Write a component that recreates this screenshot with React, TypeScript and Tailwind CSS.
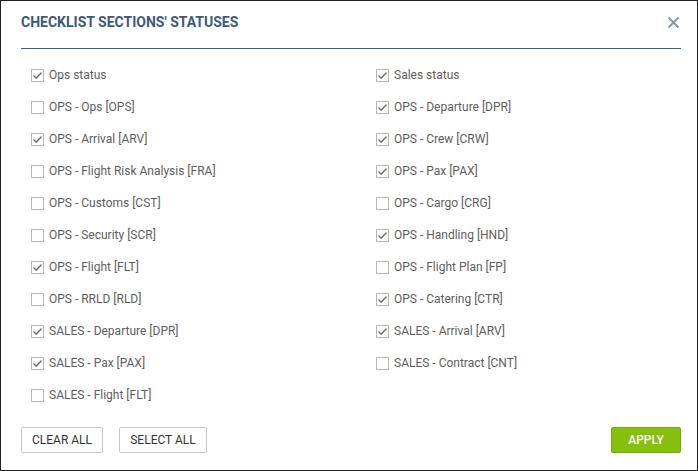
import { useState } from "react";

type Item = { label: string; checked: boolean };

const left: Item[] = [
  { label: "Ops status", checked: true },
  { label: "OPS - Ops [OPS]", checked: false },
  { label: "OPS - Arrival [ARV]", checked: true },
  { label: "OPS - Flight Risk Analysis [FRA]", checked: false },
  { label: "OPS - Customs [CST]", checked: false },
  { label: "OPS - Security [SCR]", checked: false },
  { label: "OPS - Flight [FLT]", checked: true },
  { label: "OPS - RRLD [RLD]", checked: false },
  { label: "SALES - Departure [DPR]", checked: true },
  { label: "SALES - Pax [PAX]", checked: true },
  { label: "SALES - Flight [FLT]", checked: false },
];

const right: Item[] = [
  { label: "Sales status", checked: true },
  { label: "OPS - Departure [DPR]", checked: true },
  { label: "OPS - Crew [CRW]", checked: true },
  { label: "OPS - Pax [PAX]", checked: true },
  { label: "OPS - Cargo [CRG]", checked: false },
  { label: "OPS - Handling [HND]", checked: true },
  { label: "OPS - Flight Plan [FP]", checked: false },
  { label: "OPS - Catering [CTR]", checked: true },
  { label: "SALES - Arrival [ARV]", checked: true },
  { label: "SALES - Contract [CNT]", checked: false },
];

function Check({ item, onToggle }: { item: Item; onToggle: () => void }) {
  return (
    <label className="flex h-[32px] items-center gap-[5px] cursor-pointer select-none" onClick={onToggle}>
      <span className="flex h-[13px] w-[13px] items-center justify-center border border-[#b8b8b8] bg-white">
        {item.checked && (
          <svg width="11" height="11" viewBox="0 0 11 11" fill="none">
            <path d="M1.5 5.5L4.2 8.2L9.5 2.5" stroke="#6a6a6a" strokeWidth="1.3" />
          </svg>
        )}
      </span>
      <span className="text-[12px] text-[#5e5e5e]">{item.label}</span>
    </label>
  );
}

export default function App() {
  const [l, setL] = useState(left);
  const [r, setR] = useState(right);

  const toggle = (list: Item[], set: (v: Item[]) => void, i: number) =>
    set(list.map((it, j) => (j === i ? { ...it, checked: !it.checked } : it)));

  const setAll = (v: boolean) => {
    setL(l.map((it) => ({ ...it, checked: v })));
    setR(r.map((it) => ({ ...it, checked: v })));
  };

  return (
    <div className="w-[698px] h-[471px] border border-[#222] bg-white font-['Roboto',sans-serif] flex flex-col">
      <header className="ml-5 mr-4 h-[48px] pt-[13px] border-b border-[#3d5a80] flex items-start justify-between">
        <h1 className="text-[14px] leading-[16px] font-bold text-[#3e5877]">
          CHECKLIST SECTIONS' STATUSES
        </h1>
        <button className="mt-[2px] mr-[1px] text-[#8a97a6]">
          <svg width="13" height="13" viewBox="0 0 13 13" fill="none">
            <path d="M1.5 1.5L11.5 11.5M11.5 1.5L1.5 11.5" stroke="currentColor" strokeWidth="2" />
          </svg>
        </button>
      </header>

      <div className="ml-5 mr-4 pl-[10px] pt-[10px] grid grid-cols-[345px_1fr]">
        <div className="flex flex-col">
          {l.map((it, i) => (
            <Check key={it.label} item={it} onToggle={() => toggle(l, setL, i)} />
          ))}
        </div>
        <div className="flex flex-col">
          {r.map((it, i) => (
            <Check key={it.label} item={it} onToggle={() => toggle(r, setR, i)} />
          ))}
        </div>
      </div>

      <footer className="ml-5 mr-4 mt-auto mb-[17px] flex items-center">
        <button
          onClick={() => setAll(false)}
          className="h-[26px] w-[82px] rounded-[2px] border border-[#c8c8c8] bg-white text-[12px] text-[#333]"
        >
          CLEAR ALL
        </button>
        <button
          onClick={() => setAll(true)}
          className="ml-4 h-[26px] w-[88px] rounded-[2px] border border-[#c8c8c8] bg-white text-[12px] text-[#333]"
        >
          SELECT ALL
        </button>
        <button className="ml-auto h-[26px] w-[70px] rounded-[2px] border border-[#7aab0a] bg-[#86bf0c] text-[12px] font-medium text-white">
          APPLY
        </button>
      </footer>
    </div>
  );
}
